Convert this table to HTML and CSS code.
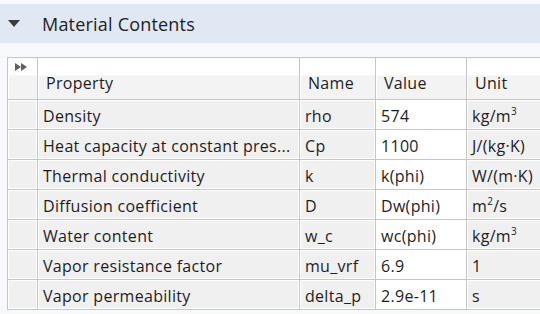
FILE: index.html
```html
<!DOCTYPE html>
<html>
<head>
<meta charset="utf-8">
<link rel="stylesheet" href="styles.css">
</head>
<body>
<div class="section-header">
  <svg class="caret" width="12" height="8" viewBox="0 0 12 8"><polygon points="0,0 12,0 6,7" fill="#3c3c3c"/></svg>
  <span class="title">Material Contents</span>
</div>
<div class="table-wrap">
  <table class="grid">
    <colgroup>
      <col class="c-rh"><col class="c-prop"><col class="c-name"><col class="c-val"><col class="c-unit">
    </colgroup>
    <thead>
      <tr>
        <th class="rh"><svg class="ff" width="13" height="8" viewBox="0 0 13 8"><polygon points="0,0 6,4 0,8" fill="#5f5f5f"/><polygon points="6,0 12,4 6,8" fill="#5f5f5f"/></svg></th>
        <th>Property</th>
        <th>Name</th>
        <th>Value</th>
        <th>Unit</th>
      </tr>
    </thead>
    <tbody>
      <tr><td class="rh"></td><td>Density</td><td>rho</td><td class="val">574</td><td>kg/m<sup>3</sup></td></tr>
      <tr><td class="rh"></td><td>Heat capacity at constant pres...</td><td>Cp</td><td class="val">1100</td><td>J/(kg·K)</td></tr>
      <tr><td class="rh"></td><td>Thermal conductivity</td><td>k</td><td class="val">k(phi)</td><td>W/(m·K)</td></tr>
      <tr><td class="rh"></td><td>Diffusion coefficient</td><td>D</td><td class="val">Dw(phi)</td><td>m<sup>2</sup>/s</td></tr>
      <tr><td class="rh"></td><td>Water content</td><td>w_c</td><td class="val">wc(phi)</td><td>kg/m<sup>3</sup></td></tr>
      <tr><td class="rh"></td><td>Vapor resistance factor</td><td>mu_vrf</td><td class="val">6.9</td><td>1</td></tr>
      <tr><td class="rh"></td><td>Vapor permeability</td><td>delta_p</td><td class="val">2.9e-11</td><td>s</td></tr>
    </tbody>
  </table>
</div>
</body>
</html>
```

FILE: styles.css
```css
html, body {
  margin: 0;
  padding: 0;
}
body {
  width: 540px;
  height: 314px;
  overflow: hidden;
  background: #f7f9fc;
  font-family: "Open Sans", "Noto Sans", sans-serif;
  color: #1e1e1e;
}
.section-header {
  margin-top: 4px;
  height: 39px;
  background: #dfe8f3;
  display: flex;
  align-items: center;
  padding-left: 8px;
}
.caret {
  display: block;
  margin-top: 1px;
}
.title {
  margin-left: 22px;
  font-size: 18px;
  letter-spacing: 0.2px;
  color: #1e1e1e;
}
.table-wrap {
  margin-top: 14px;
  padding-left: 7px;
}
.grid {
  border-collapse: collapse;
  table-layout: fixed;
  width: 533px;
  border-left: 1px solid #c6c6c6;
  border-top: 1px solid #c6c6c6;
  font-size: 16px;
  letter-spacing: 0.3px;
}
.c-rh { width: 30px; }
.c-prop { width: 262px; }
.c-name { width: 76px; }
.c-val { width: 91px; }
.c-unit { width: 74px; }
.grid th, .grid td {
  border-right: 1px solid #c6c6c6;
  border-bottom: 1px solid #c6c6c6;
  padding: 0 0 0 5px;
  white-space: nowrap;
  overflow: hidden;
  text-align: left;
  font-weight: normal;
}
.grid th:last-child, .grid td:last-child {
  border-right: 0;
}
.grid th {
  height: 42px;
  vertical-align: bottom;
  padding-bottom: 5px;
  padding-left: 8px;
  box-sizing: border-box;
  background: linear-gradient(#ffffff 0, #ffffff 17px, #f3f3f3 17px, #f3f3f3 100%);
  box-shadow: inset 1px 0 0 #ffffff;
}
.grid th.rh {
  padding: 0;
  vertical-align: top;
}
.ff {
  display: block;
  margin: 5px 0 0 7px;
}
.grid td {
  height: 26px;
  padding-top: 3px;
  background: #f0f0f0;
  box-shadow: inset 1px 1px 0 #ffffff, inset -1px -1px 0 #ffffff;
}
.grid td.val {
  background: #ffffff;
  box-shadow: none;
}
.grid td.rh {
  padding: 0;
  height: 29px;
}
sup {
  font-size: 10px;
  vertical-align: 0;
  position: relative;
  top: -7px;
  line-height: 0;
}
```
